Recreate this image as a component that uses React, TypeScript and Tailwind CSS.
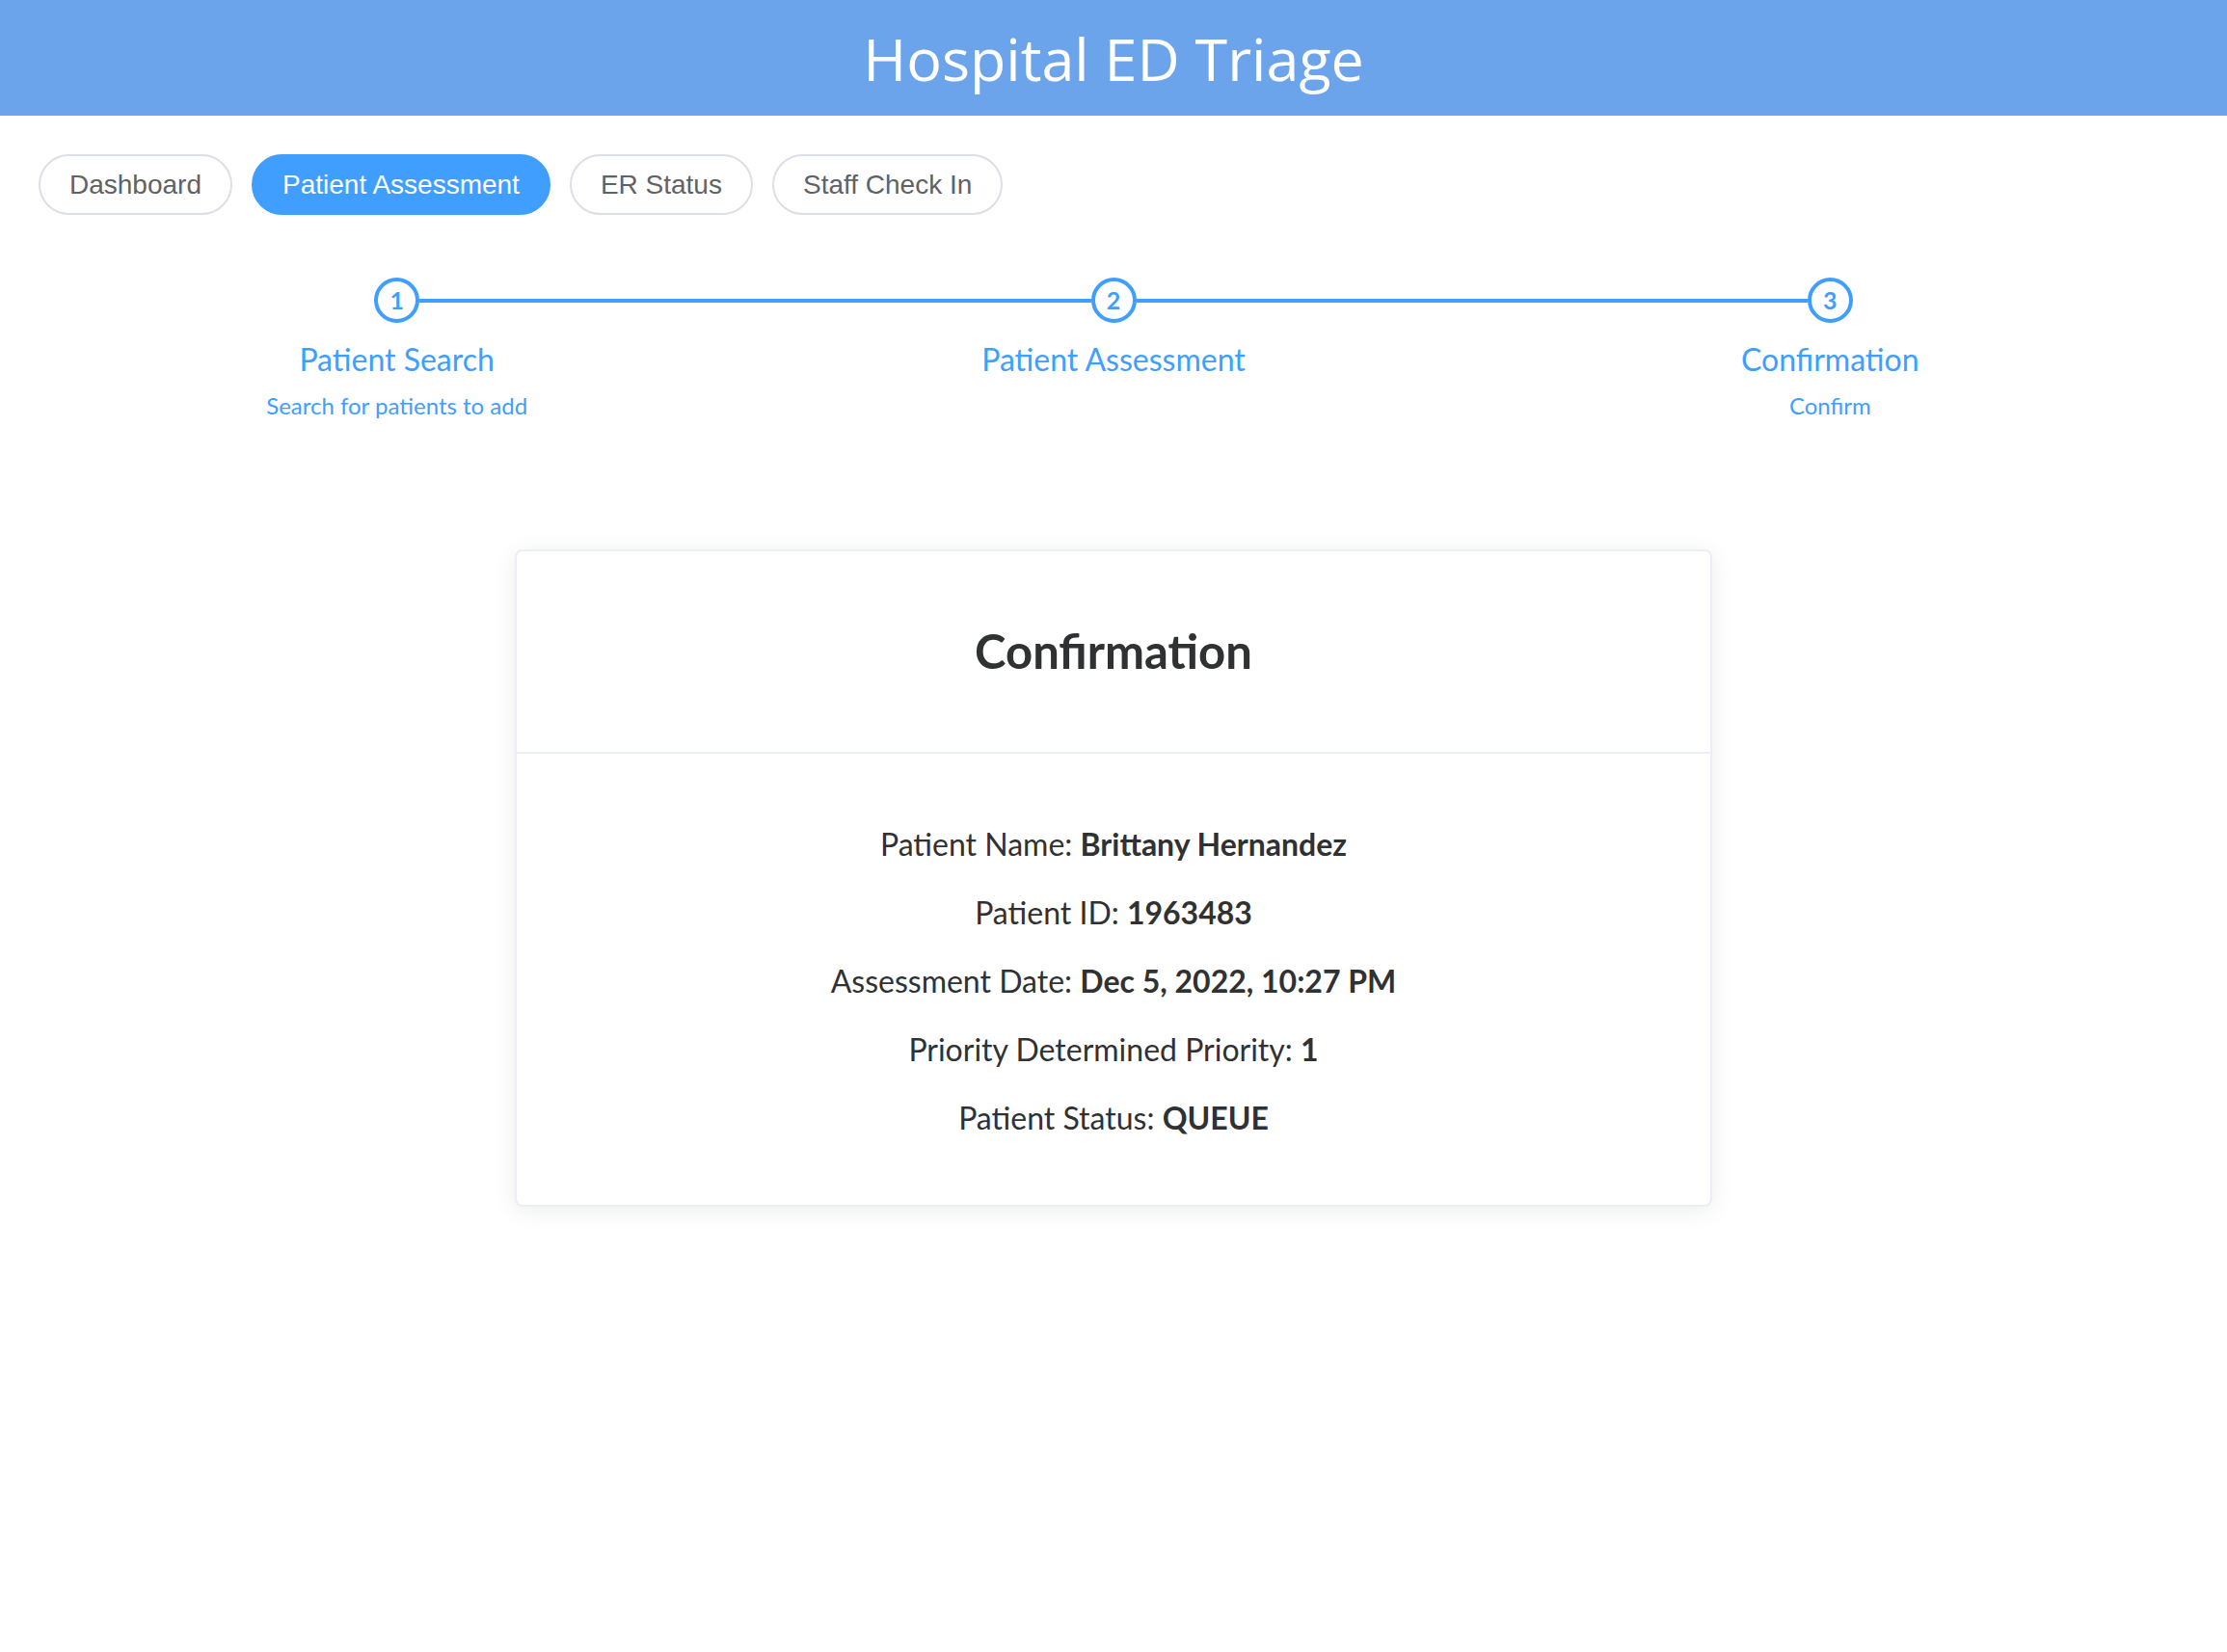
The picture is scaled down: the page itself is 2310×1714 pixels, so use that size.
import React from 'react';

const tabs = ['Dashboard', 'Patient Assessment', 'ER Status', 'Staff Check In'];

const steps = [
  { n: 1, title: 'Patient Search', desc: 'Search for patients to add' },
  { n: 2, title: 'Patient Assessment', desc: '' },
  { n: 3, title: 'Confirmation', desc: 'Confirm' },
];

const rows = [
  { label: 'Patient Name:', value: 'Brittany Hernandez' },
  { label: 'Patient ID:', value: '1963483' },
  { label: 'Assessment Date:', value: 'Dec 5, 2022, 10:27 PM' },
  { label: 'Priority Determined Priority:', value: '1' },
  { label: 'Patient Status:', value: 'QUEUE' },
];

export default function App() {
  return (
    <div className="min-h-screen bg-white font-['Lato',sans-serif]">
      {/* top bar */}
      <header className="h-[120px] bg-[#6ca4ec] flex items-center justify-center">
        <h1 className="text-white text-[61px] font-['Open_Sans',sans-serif] font-normal leading-none">
          Hospital ED Triage
        </h1>
      </header>

      {/* nav pills */}
      <nav className="flex gap-[20px] px-[40px] pt-[40px]">
        {tabs.map((t) => {
          const active = t === 'Patient Assessment';
          return (
            <button
              key={t}
              className={
                active
                  ? "h-[63px] px-[30px] rounded-full border-2 border-[#409eff] bg-[#409eff] text-white text-[28px] font-['Liberation_Sans',Arial,sans-serif]"
                  : "h-[63px] px-[30px] rounded-full border-2 border-[#dcdfe6] bg-white text-[#606266] text-[28px] font-['Liberation_Sans',Arial,sans-serif]"
              }
            >
              {t}
            </button>
          );
        })}
      </nav>

      {/* steps */}
      <div className="grid grid-cols-3 px-[40px] mt-[65px]">
        {steps.map((s, i) => (
          <div key={s.n} className="flex flex-col items-center">
            <div className="flex items-center w-full">
              <div className={i === 0 ? 'flex-1 h-[4px]' : 'flex-1 h-[4px] bg-[#409eff]'} />
              <div className="w-[47px] h-[47px] rounded-full border-[4px] border-[#409eff] flex items-center justify-center text-[#409eff] text-[25px] font-bold">
                {s.n}
              </div>
              <div className={i === 2 ? 'flex-1 h-[4px]' : 'flex-1 h-[4px] bg-[#409eff]'} />
            </div>
            <div className="text-[#409eff] text-[32px] leading-[76px]">{s.title}</div>
            {s.desc && (
              <div className="text-[#409eff] text-[24px] leading-[40px] mt-[-10px]">{s.desc}</div>
            )}
          </div>
        ))}
      </div>

      {/* confirmation card */}
      <div className="w-[1242px] mx-auto mt-[129px] bg-white border-2 border-[#ebeef5] rounded-[8px] shadow-[0_4px_24px_rgba(0,0,0,0.08)]">
        <div className="h-[210px] flex items-center justify-center border-b-2 border-[#ebeef5]">
          <h2 className="text-[49px] font-bold text-[#303133]">Confirmation</h2>
        </div>
        <div className="flex flex-col items-center gap-[22px] pt-[69px] pb-[66px] text-[32px] leading-[49px] text-[#303133]">
          {rows.map((r) => (
            <p key={r.label}>
              {r.label} <span className="font-bold">{r.value}</span>
            </p>
          ))}
        </div>
      </div>
    </div>
  );
}
